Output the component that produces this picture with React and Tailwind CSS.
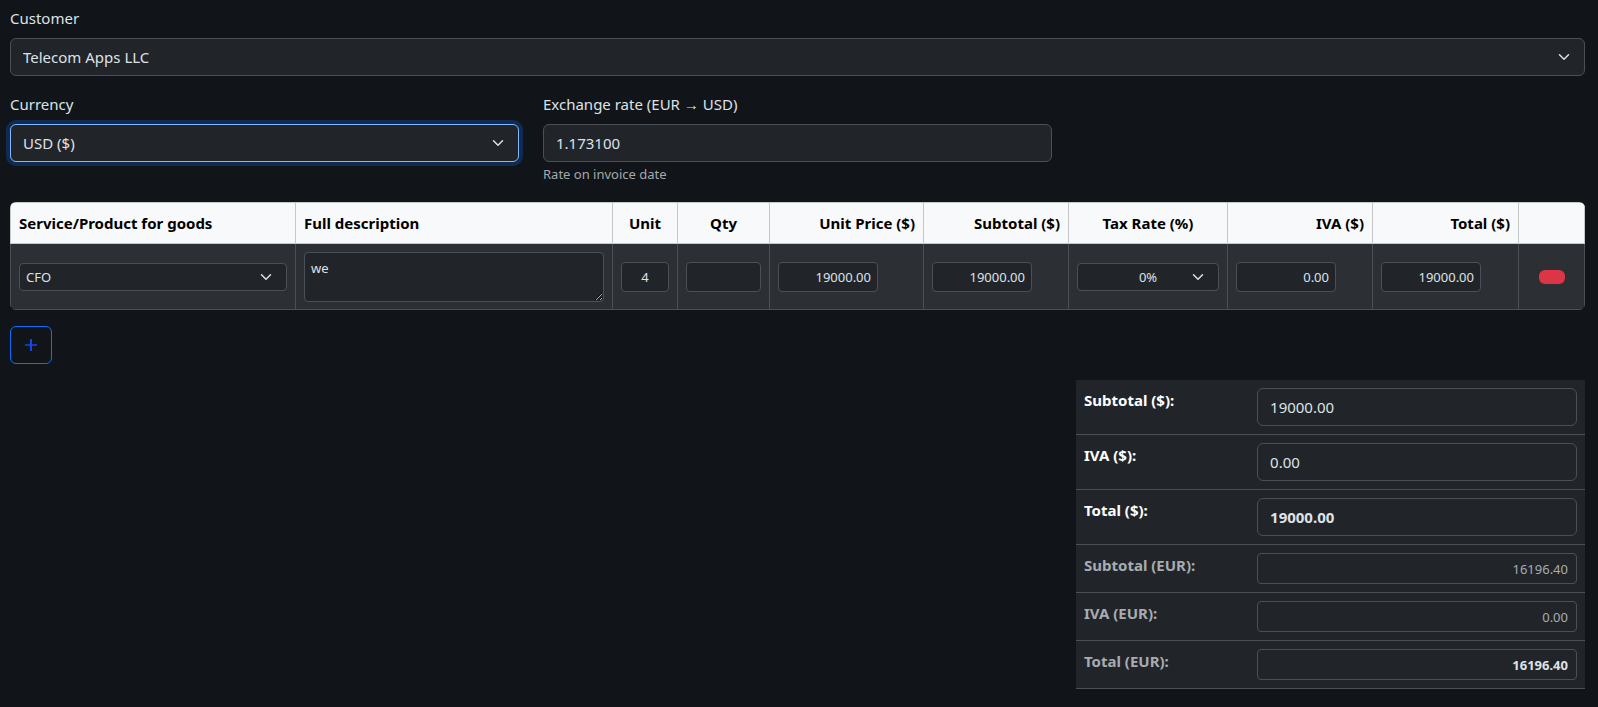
import React, { useState } from 'react';

const control = 'w-full appearance-none border bg-[#212529] text-[#dee2e6] outline-none';
const regular = `${control} h-[38px] rounded-md px-3 text-[15px] leading-6`;
const compact = `${control} rounded border-[#495057] px-1.5 text-[13px]`;
const cellInput = `${compact} block h-[30px]`;
const cellSelect = `${compact} block h-7`;

function Chevron() {
  return (
    <svg
      viewBox="0 0 16 16"
      className="pointer-events-none absolute top-1/2 right-[13px] h-3 w-4 -translate-y-1/2"
      fill="none"
      stroke="#dee2e6"
      strokeWidth="2"
      strokeLinecap="round"
      strokeLinejoin="round"
    >
      <path d="m2 5 6 6 6-6" />
    </svg>
  );
}

function Select({ className, options, ...props }) {
  return (
    <div className="relative">
      <select className={className} {...props}>
        {options.map((option) => (
          <option key={option}>{option}</option>
        ))}
      </select>
      <Chevron />
    </div>
  );
}

const columns = [
  { title: 'Service/Product for goods', width: 'w-[285px]', align: 'text-left' },
  { title: 'Full description', width: '', align: 'text-left' },
  { title: 'Unit', width: 'w-[65px]', align: 'text-center' },
  { title: 'Qty', width: 'w-[92px]', align: 'text-center' },
  { title: 'Unit Price ($)', width: 'w-[154px]', align: 'text-right' },
  { title: 'Subtotal ($)', width: 'w-[145px]', align: 'text-right' },
  { title: 'Tax Rate (%)', width: 'w-[159px]', align: 'text-center' },
  { title: 'IVA ($)', width: 'w-[145px]', align: 'text-right' },
  { title: 'Total ($)', width: 'w-[146px]', align: 'text-right' },
  { title: '', width: 'w-[66px]', align: 'text-center' },
];

const totals = [
  { id: 'subtotal', label: 'Subtotal ($):', value: '19000.00' },
  { id: 'iva', label: 'IVA ($):', value: '0.00' },
  { id: 'total', label: 'Total ($):', value: '19000.00', bold: true },
];

const totalsEur = [
  { id: 'subtotal-eur', label: 'Subtotal (EUR):', value: '16196.40' },
  { id: 'iva-eur', label: 'IVA (EUR):', value: '0.00' },
  { id: 'total-eur', label: 'Total (EUR):', value: '16196.40', bold: true },
];

function ItemCell({ children }) {
  return <td className="border border-[#495057] px-2 pt-2 pb-[7px] align-middle">{children}</td>;
}

export default function App() {
  const [currency, setCurrency] = useState('USD ($)');
  const [rate, setRate] = useState('1.173100');

  return (
    <div className="min-h-screen bg-[#111519] pt-1.5 pr-[13px] pb-4 pl-2.5 font-['Noto_Sans','Open_Sans',sans-serif] text-[15px] leading-6 text-[#dee2e6]">
      <div className="mb-4">
        <label htmlFor="customer" className="mb-2 block">Customer</label>
        <Select id="customer" className={`${regular} border-[#495057]`} options={['Telecom Apps LLC']} />
      </div>

      <div className="mb-4 grid grid-cols-3 gap-6">
        <div>
          <label htmlFor="currency" className="mb-2 block">Currency</label>
          <Select
            id="currency"
            value={currency}
            onChange={(e) => setCurrency(e.target.value)}
            className={`${regular} border-[#86b7fe] ring-4 ring-[#0d6efd]/25`}
            options={['USD ($)', 'EUR (€)']}
          />
        </div>
        <div>
          <label htmlFor="rate" className="mb-2 block">Exchange rate (EUR → USD)</label>
          <input
            id="rate"
            type="text"
            value={rate}
            onChange={(e) => setRate(e.target.value)}
            className={`${regular} block border-[#495057]`}
          />
          <p className="mt-0.5 pb-0.5 text-[13px] leading-5 text-[#a5a8ab]">Rate on invoice date</p>
        </div>
      </div>

      <div className="mb-4 overflow-hidden rounded-md">
        <table className="w-full table-fixed border-collapse bg-[#2c3034]">
          <thead className="bg-[#f8f9fa] text-black">
            <tr>
              {columns.map((col) => (
                <th key={col.title} className={`border border-[#c6c7c8] p-2 font-bold ${col.width} ${col.align}`}>
                  {col.title}
                </th>
              ))}
            </tr>
          </thead>
          <tbody>
            <tr>
              <ItemCell>
                <Select aria-label="Service" className={cellSelect} options={['CFO']} />
              </ItemCell>
              <ItemCell>
                <textarea
                  aria-label="Full description"
                  defaultValue="we"
                  className={`${compact} block h-[50px] resize py-1.5 leading-[18px] scheme-dark`}
                />
              </ItemCell>
              <ItemCell>
                <input aria-label="Unit" type="text" defaultValue="4" className={`${cellInput} text-center`} />
              </ItemCell>
              <ItemCell>
                <input aria-label="Qty" type="text" className={`${cellInput} text-center`} />
              </ItemCell>
              <ItemCell>
                <input aria-label="Unit price" type="text" defaultValue="19000.00" className={`${cellInput} max-w-[100px] text-right`} />
              </ItemCell>
              <ItemCell>
                <input aria-label="Subtotal" type="text" readOnly value="19000.00" className={`${cellInput} max-w-[100px] text-right`} />
              </ItemCell>
              <ItemCell>
                <Select aria-label="Tax rate" className={`${cellSelect} text-center`} options={['0%', '21%']} />
              </ItemCell>
              <ItemCell>
                <input aria-label="IVA" type="text" readOnly value="0.00" className={`${cellInput} max-w-[100px] text-right`} />
              </ItemCell>
              <ItemCell>
                <input aria-label="Total" type="text" readOnly value="19000.00" className={`${cellInput} max-w-[100px] text-right`} />
              </ItemCell>
              <ItemCell>
                <button type="button" aria-label="Remove line" className="mx-auto block h-3.5 w-[26px] rounded-md bg-[#dc3545]" />
              </ItemCell>
            </tr>
          </tbody>
        </table>
      </div>

      <button
        type="button"
        aria-label="Add line"
        className="mb-4 flex h-[38px] w-[42px] items-center justify-center rounded-md border border-[#0d6efd]"
      >
        <svg viewBox="0 0 12 12" className="size-3">
          <path d="M0 6h12" stroke="#1039b8" strokeWidth="2" />
          <path d="M6 0v12" stroke="#1149e8" strokeWidth="2" />
        </svg>
      </button>

      <div className="grid grid-cols-3 gap-6">
        <table className="col-start-3 w-full table-fixed border-collapse bg-[#212529]">
          <tbody>
            {totals.map((row) => (
              <tr key={row.id} className="border-b border-[#495057]">
                <th className="w-[34%] p-2 text-left align-top font-bold text-white">
                  <label htmlFor={row.id}>{row.label}</label>
                </th>
                <td className="p-2">
                  <input
                    id={row.id}
                    type="text"
                    readOnly
                    value={row.value}
                    className={`${regular} block border-[#495057] ${row.bold ? 'font-bold' : ''}`}
                  />
                </td>
              </tr>
            ))}
            {totalsEur.map((row) => (
              <tr key={row.id} className="border-b border-[#495057]">
                <th className="w-[34%] p-2 text-left align-top font-bold text-[#a7acb1]">
                  <label htmlFor={row.id}>{row.label}</label>
                </th>
                <td className="p-2">
                  <input
                    id={row.id}
                    type="text"
                    readOnly
                    value={row.value}
                    className={`block h-[31px] w-full rounded border border-[#495057] bg-[#212529] px-2 text-right text-[13px] outline-none ${row.bold ? 'font-bold text-[#dee2e6]' : 'text-[#a7acb1]'}`}
                  />
                </td>
              </tr>
            ))}
          </tbody>
        </table>
      </div>
    </div>
  );
}
